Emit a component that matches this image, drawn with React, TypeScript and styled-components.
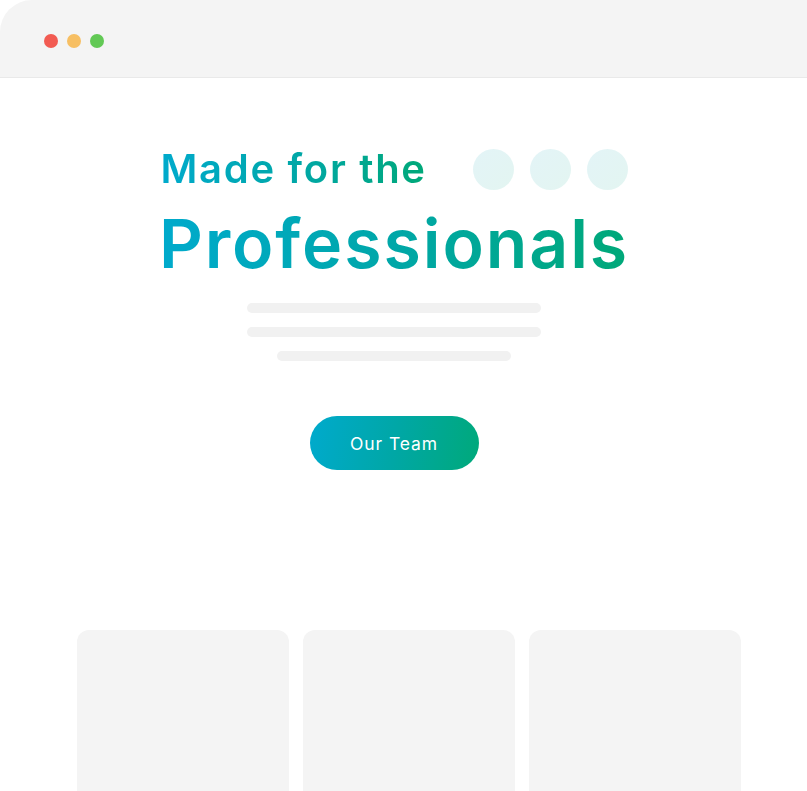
import React from "react";
import styled, { createGlobalStyle } from "styled-components";

const Global = createGlobalStyle`
  html, body { margin: 0; padding: 0; background: #ffffff; }
  body { font-family: Inter, "Noto Sans", sans-serif; }
`;

const Window = styled.div`
  width: 807px;
  height: 791px;
  overflow: hidden;
  background: #ffffff;
  display: flex;
  flex-direction: column;
`;

const TitleBar = styled.div`
  height: 78px;
  flex: none;
  box-sizing: border-box;
  background: #f4f4f4;
  border-bottom: 1px solid #e9e9e9;
  border-top-left-radius: 32px;
  display: flex;
  align-items: flex-start;
  gap: 9px;
  padding: 34px 0 0 44px;
`;

const Light = styled.span<{ $c: string }>`
  width: 14px;
  height: 14px;
  border-radius: 50%;
  background: ${(p) => p.$c};
`;

const Hero = styled.section`
  display: flex;
  flex-direction: column;
  align-items: center;
  padding: 69px 19px 0 0;
`;

const gradientText = `
  background: linear-gradient(90deg, #00aacc 0%, #00a7a8 50%, #00a878 100%);
  -webkit-background-clip: text;
  background-clip: text;
  color: transparent;
`;

const TopRow = styled.div`
  display: flex;
  align-items: center;
  width: 467px;
`;

const Small = styled.h2`
  margin: 0;
  font-size: 40px;
  line-height: 44px;
  font-weight: 600;
  letter-spacing: 1.7px;
  ${gradientText}
`;

const Bubbles = styled.div`
  display: flex;
  gap: 16px;
  margin-left: auto;
`;

const Bubble = styled.span`
  width: 41px;
  height: 41px;
  border-radius: 50%;
  background: linear-gradient(135deg, #e3f4f7, #e3f5f1);
`;

const Big = styled.h1`
  margin: 10px 0 0;
  font-size: 68px;
  line-height: 84px;
  font-weight: 600;
  letter-spacing: 1.9px;
  ${gradientText}
`;

const Lines = styled.div`
  display: flex;
  flex-direction: column;
  align-items: center;
  gap: 14px;
  margin-top: 18px;
`;

const Line = styled.span<{ $w: number }>`
  width: ${(p) => p.$w}px;
  height: 10px;
  border-radius: 5px;
  background: #f1f1f1;
`;

const Button = styled.button`
  margin-top: 55px;
  width: 169px;
  height: 54px;
  border: none;
  border-radius: 27px;
  background: linear-gradient(100deg, #00aacd 0%, #00a7a6 50%, #00a97a 100%);
  color: #ffffff;
  font-family: Inter, "Noto Sans", sans-serif;
  font-size: 17.5px;
  font-weight: 400;
  letter-spacing: 0.9px;
  cursor: pointer;
`;

const Cards = styled.div`
  display: grid;
  grid-template-columns: repeat(3, 212px);
  gap: 14px;
  padding-left: 77px;
  margin-top: 160px;
`;

const Card = styled.div`
  height: 200px;
  border-radius: 12px;
  background: #f4f4f4;
`;

export default function App() {
  return (
    <>
      <Global />
      <Window>
        <TitleBar>
          <Light $c="#f25b52" />
          <Light $c="#f7bf63" />
          <Light $c="#62c955" />
        </TitleBar>
        <Hero>
          <TopRow>
            <Small>Made for the</Small>
            <Bubbles>
              <Bubble />
              <Bubble />
              <Bubble />
            </Bubbles>
          </TopRow>
          <Big>Professionals</Big>
          <Lines>
            <Line $w={294} />
            <Line $w={294} />
            <Line $w={234} />
          </Lines>
          <Button>Our Team</Button>
        </Hero>
        <Cards>
          <Card />
          <Card />
          <Card />
        </Cards>
      </Window>
    </>
  );
}
